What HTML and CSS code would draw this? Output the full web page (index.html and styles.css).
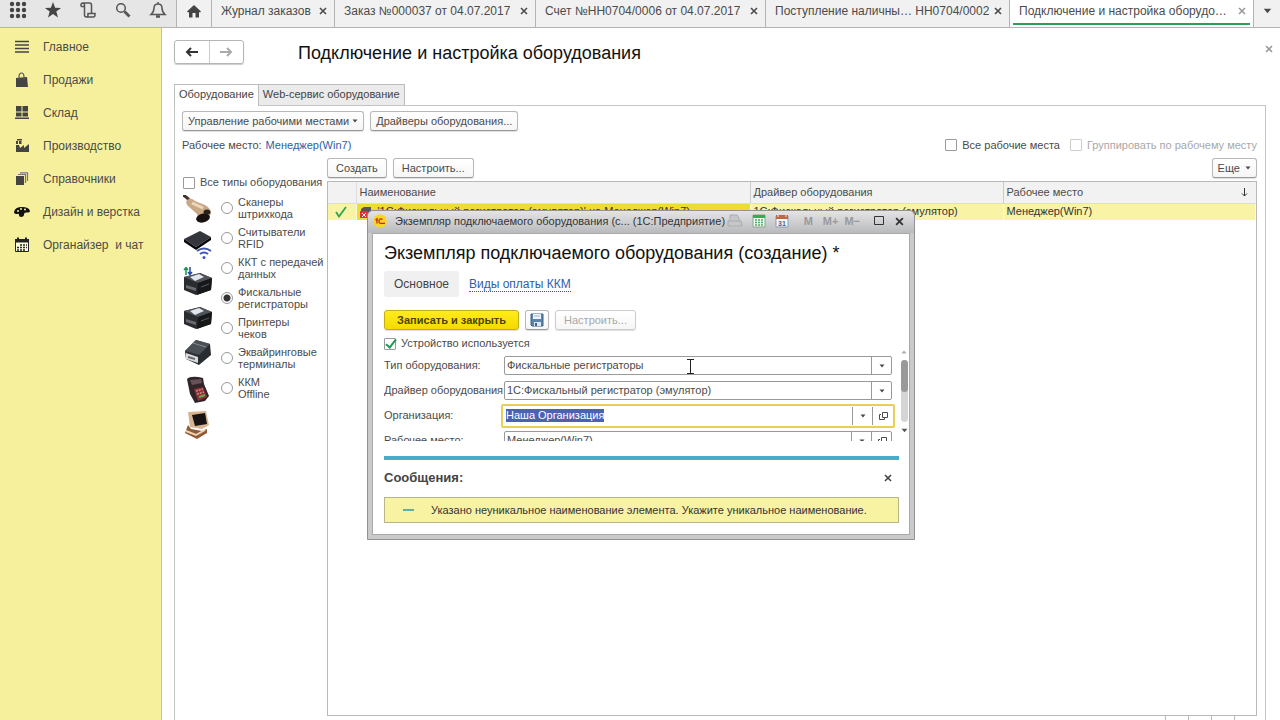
FILE: index.html
```html
<!DOCTYPE html>
<html lang="ru">
<head>
<meta charset="utf-8">
<title>Подключение и настройка оборудования</title>
<link rel="stylesheet" href="styles.css">
</head>
<body>
<svg class="defs" aria-hidden="true">
  <symbol id="i-cross" viewBox="0 0 8 8"><path d="M1 1l6 6M7 1L1 7" fill="none" stroke="currentColor" stroke-width="1.6"/></symbol>
  <symbol id="i-down" viewBox="0 0 6 4"><path d="M0.500 0.500h5L3 3.500z" fill="currentColor"/></symbol>
  <symbol id="i-open" viewBox="0 0 10 10"><path d="M4.500 1.500h5v5h-5zM3 3.500H1.500v5h5V7" fill="none" stroke="currentColor"/></symbol>
  <symbol id="i-printer" viewBox="0 0 30 28">
    <path d="M1 8L17 4l12 5-1 12-15 5L1 21z" fill="#2b2c2f"/>
    <path d="M1 8L17 4l12 5-14 5z" fill="#50535a"/>
    <path d="M7 8l9-3 5 3-9 4z" fill="#dfe6ee"/>
    <path d="M15 14l14-5-1 12-14 5z" fill="#17181a"/>
    <path d="M3 16l10 3v3L3 19z" fill="#686b70"/>
    <path d="M18 18l8-3" stroke="#5a5d62"/>
  </symbol>
</svg>

<header class="topbar">
  <nav class="tools">
    <button aria-label="Меню"><svg viewBox="0 0 18 18" width="18" height="18" fill="#444"><circle cx="3" cy="3" r="2.200"/><circle cx="9" cy="3" r="2.200"/><circle cx="15" cy="3" r="2.200"/><circle cx="3" cy="9" r="2.200"/><circle cx="9" cy="9" r="2.200"/><circle cx="15" cy="9" r="2.200"/><circle cx="3" cy="15" r="2.200"/><circle cx="9" cy="15" r="2.200"/><circle cx="15" cy="15" r="2.200"/></svg></button>
    <button aria-label="Избранное"><svg viewBox="0 0 18 18" width="18" height="18"><path d="M9 1l2.100 5.700 6 .2-4.800 3.700 1.700 5.900L9 13.100l-5 3.400 1.700-5.900L.9 6.900l6-.2z" fill="#444"/></svg></button>
    <button aria-label="История"><svg viewBox="0 0 18 18" width="18" height="18" fill="none" stroke="#555" stroke-width="1.500"><path d="M2 5.500V4q0-2 2-2h6.500q2 0 2 2v8.500M2 5.500h3.500V4q0-1.500-1.500-2M5.500 5.500V14q0 2 2 2H14q2 0 2-2v-1.500H9V14q0 2-2 2"/></svg></button>
    <button aria-label="Поиск"><svg viewBox="0 0 18 18" width="18" height="18" fill="none" stroke="#555"><circle cx="7" cy="7" r="4.300" stroke-width="1.500"/><path d="M10.500 10.500l5 5" stroke-width="2.800"/></svg></button>
    <button aria-label="Уведомления"><svg viewBox="0 0 18 18" width="18" height="18" fill="none" stroke="#555" stroke-width="1.500"><path d="M2 13.500Q5 11 5 7q0-4 4-4t4 4q0 4 3 6.500zM9 3V1"/><path d="M7 15.500h4" stroke-width="2.500"/></svg></button>
  </nav>
  <nav class="windows">
    <button class="home" aria-label="Начальная страница"><svg viewBox="0 0 14 14" width="14" height="14"><path d="M7 1l7 6.500-1 1L12 8v5.500H8.500V9h-3v4.500H2V8l-1 .5-1-1z" fill="#444"/></svg></button>
    <div class="win w1"><a href="#">Журнал заказов</a><button aria-label="Закрыть"><svg width="8" height="8"><use href="#i-cross"/></svg></button></div>
    <div class="win w2"><a href="#">Заказ №000037 от 04.07.2017</a><button aria-label="Закрыть"><svg width="8" height="8"><use href="#i-cross"/></svg></button></div>
    <div class="win w3"><a href="#">Счет №НН0704/0006 от 04.07.2017</a><button aria-label="Закрыть"><svg width="8" height="8"><use href="#i-cross"/></svg></button></div>
    <div class="win w4"><a href="#">Поступление наличны…&nbsp;НН0704/0002</a><button aria-label="Закрыть"><svg width="8" height="8"><use href="#i-cross"/></svg></button></div>
    <div class="win w5 current"><a href="#">Подключение и настройка оборудо…</a><button aria-label="Закрыть"><svg width="8" height="8"><use href="#i-cross"/></svg></button></div>
    <button class="all" aria-label="Все окна"><svg width="9" height="6"><use href="#i-down"/></svg></button>
  </nav>
</header>

<div class="body">
  <nav class="sidebar">
    <a href="#"><svg viewBox="0 0 16 16" width="16" height="16"><path d="M1 2.500h14M1 6h14M1 9.500h14M1 13h14" stroke="#444" stroke-width="1.600"/></svg>Главное</a>
    <a href="#"><svg viewBox="0 0 16 16" width="16" height="16"><path d="M2 6l11-1 1 10H2z" fill="#444"/><path d="M5 8V5q0-4 2.500-4T10 5v3" fill="none" stroke="#555" stroke-width="1.200"/></svg>Продажи</a>
    <a href="#"><svg viewBox="0 0 16 16" width="16" height="16" fill="#444"><path d="M2 1h5.500v5.500H2zM8.500 1H14v5.500H8.500zM2 7.500h5.500v4H2zM8.500 7.500H14v4H8.500zM1 12.500h14V14H1z"/></svg>Склад</a>
    <a href="#"><svg viewBox="0 0 16 16" width="16" height="16" fill="#444"><path d="M2 14V7h3l1 3 4-3v3l5-4v8zM2 3h2v3H2zM5 3h2.500v3H5zM3 1h5v1.500H3z"/></svg>Производство</a>
    <a href="#"><svg viewBox="0 0 16 16" width="16" height="16"><path d="M2 5h8v9H2z" fill="#444"/><path d="M4 3.500h7.500V12M6 1.800h7.500V10" fill="none" stroke="#777" stroke-width="1.200"/></svg>Справочники</a>
    <a href="#"><svg viewBox="0 0 16 16" width="16" height="16"><path d="M0 8Q1 3 8 3t8 4q0 2-4 1.500-2 0-2 2T7 13q-2 0-2-2t-2-1Q0 10 0 8z" fill="#111"/><g fill="#f6f09c"><circle cx="4" cy="7" r="1"/><circle cx="7" cy="5" r="1"/><circle cx="11" cy="5.500" r="1"/></g></svg>Дизайн и верстка</a>
    <a href="#"><svg viewBox="0 0 16 16" width="16" height="16"><path d="M1.500 2.500h13v12h-13z" fill="#fffde0" stroke="#222"/><path d="M1 2h14v3.500H1zM3 .5h2V3H3zM11 .5h2V3h-2z" fill="#222"/><path d="M6 8h7M3 10.500h10M3 13h8" stroke="#222" stroke-width="1.500" stroke-dasharray="2 1"/></svg>Органайзер&nbsp; и чат</a>
  </nav>

  <main class="main">
    <div class="heading">
      <div class="history">
        <button aria-label="Назад"><svg viewBox="0 0 14 10" width="14" height="10"><path d="M13 5H3M6 1L2 5l4 4" fill="none" stroke="#333" stroke-width="2"/></svg></button>
        <button aria-label="Вперед"><svg viewBox="0 0 14 10" width="14" height="10"><path d="M1 5h10M8 1l4 4-4 4" fill="none" stroke="#aaa" stroke-width="2"/></svg></button>
      </div>
      <h1>Подключение и настройка оборудования</h1>
      <button class="close" aria-label="Закрыть форму"><svg width="8" height="8"><use href="#i-cross"/></svg></button>
    </div>

    <div class="tabs"><button class="active">Оборудование</button><button>Web-сервис оборудование</button></div>

    <section class="panel">
      <div class="commands top-commands">
        <button class="btn">Управление рабочими местами<svg width="6" height="4"><use href="#i-down"/></svg></button>
        <button class="btn">Драйверы оборудования...</button>
      </div>
      <div class="place">
        <span>Рабочее место:</span><a href="#">Менеджер(Win7)</a>
        <label class="check first"><input type="checkbox">Все рабочие места</label>
        <label class="check off"><input type="checkbox" disabled>Группировать по рабочему месту</label>
      </div>

      <div class="split">
        <div class="types">
          <label class="check"><input type="checkbox">Все типы оборудования</label>
          <div class="typecols">
            <div class="pics">
              <svg viewBox="0 0 30 28"><path d="M0 0q7 4 8 9" fill="none" stroke="#443028" stroke-width="3"/><path d="M4 5q4-3 8 1l10 4q6 3 6 9l-7 7q-6-1-7-7L5 11q-3-3-1-6z" fill="#c9a886"/><path d="M9 8l11 5" stroke="#ecd8bf" stroke-width="3"/><ellipse cx="20" cy="23" rx="7" ry="4.500" transform="rotate(-15 20 23)" fill="#17120f"/><ellipse cx="24" cy="17" rx="3.500" ry="2.500" fill="#2b211b"/></svg>
              <svg viewBox="0 0 30 28"><path d="M1 8L17 0l11 6-15 10z" fill="#34363d"/><path d="M1 8l12 8v3L1 11zM13 16L28 6v3L13 19z" fill="#08090b"/><path d="M14 20q7-5 14 0M17 23q4-3 8 0" fill="none" stroke="#4052b5" stroke-width="2"/><circle cx="21" cy="26.500" r="1.500" fill="#4052b5"/></svg>
              <svg viewBox="0 0 30 28"><use href="#i-printer" y="2" width="30" height="28"/><path d="M3 8V1M1 3l2-2.500L5 3" fill="none" stroke="#179252" stroke-width="1.500"/><path d="M7 0v7M5 5l2 2.500L9 5" fill="none" stroke="#2946a5" stroke-width="1.500"/></svg>
              <svg viewBox="0 0 30 28"><use href="#i-printer" width="30" height="28"/></svg>
              <svg viewBox="0 0 30 28"><path d="M2 12L13 1l14 4 1 11-12 10L3 20z" fill="#292c30"/><path d="M13 1l14 4-11 11L2 12z" fill="#4b5057"/><path d="M10 4l13 4" stroke="#858b92"/><path d="M3 14l12 4v6L3 20z" fill="#d9dadc"/><path d="M5 17l7 2v2l-7-2z" fill="#666"/></svg>
              <svg viewBox="0 0 30 28"><path d="M4 4q4-4 16-1l1 6 5 12-4 5-10 2-5-9z" fill="#302529"/><path d="M7 5l11-1 1 4-10 2z" fill="#68515b"/><path d="M11 14l9-2 4 10-9 4z" fill="#8c3038"/><path d="M13 16l7-2M14 19l7-2" stroke="#d98b86" stroke-dasharray="2 1" stroke-width="1.500"/><path d="M16 22l6-2" stroke="#65a94c" stroke-width="2"/></svg>
              <svg viewBox="0 0 30 28"><path d="M5 1l18-1 3 14-7 4-12-2z" fill="#d5b48f"/><path d="M9 4l13-2 2 11-12 2z" fill="#151313"/><path d="M5 14l3 4 11 2 5-2v4l-10 6L2 22z" fill="#8f5a36"/><path d="M3 20l10 4 9-5" fill="none" stroke="#edd4b3" stroke-width="2"/></svg>
            </div>
            <div class="radios">
              <label><input type="radio" name="t">Сканеры<br>штрихкода</label>
              <label><input type="radio" name="t">Считыватели<br>RFID</label>
              <label><input type="radio" name="t">ККТ с передачей<br>данных</label>
              <label><input type="radio" name="t" checked>Фискальные<br>регистраторы</label>
              <label><input type="radio" name="t">Принтеры<br>чеков</label>
              <label><input type="radio" name="t">Эквайринговые<br>терминалы</label>
              <label><input type="radio" name="t">ККМ<br>Offline</label>
            </div>
          </div>
        </div>

        <div class="listing">
          <div class="commands">
            <button class="btn">Создать</button>
            <button class="btn">Настроить...</button>
            <button class="btn more">Еще<svg width="6" height="4"><use href="#i-down"/></svg></button>
          </div>
          <div class="grid">
            <table>
              <colgroup><col class="c-mark"><col class="c-name"><col class="c-driver"><col></colgroup>
              <thead><tr><th></th><th>Наименование</th><th>Драйвер оборудования</th><th><span class="sorted">Рабочее место<svg viewBox="0 0 7 9" width="7" height="9"><path d="M3.500 0v8M1 5.500L3.500 8 6 5.500" fill="none" stroke="#333"/></svg></span></th></tr></thead>
              <tbody><tr>
                <td><svg class="tick" viewBox="0 0 12 12" width="12" height="12"><path d="M1 6l3 4.500L11 1" fill="none" stroke="#2fa353" stroke-width="1.800"/></svg></td>
                <td class="cell-on"><span class="named"><svg viewBox="0 0 12 12" width="12" height="12"><path d="M1 3l3-2h7v8H1z" fill="#555"/><path d="M0 5h8v7H0z" fill="#d8343a"/><path d="M2 7l4 4M6 7l-4 4" stroke="#fff"/></svg>'1С:Фискальный регистратор (эмулятор)' на Менеджер(Win7)</span></td>
                <td>1С:Фискальный регистратор (эмулятор)</td>
                <td>Менеджер(Win7)</td>
              </tr></tbody>
            </table>
          </div>
          <div class="pager"><i></i><i></i><i></i><i></i></div>
        </div>
      </div>
    </section>

    <div class="dialog" role="dialog" aria-labelledby="dlg">
      <div class="titlebar">
        <svg viewBox="0 0 14 14" width="14" height="14"><circle cx="7" cy="7" r="6.800" fill="#f9d52a"/><path d="M2.500 6L4 4.800V9.500M9.500 5.500Q8.500 4.500 7 5 5.500 6 6 8q.5 1.500 2 1.300h4" fill="none" stroke="#c8281e" stroke-width="1.300"/></svg>
        <span class="caption">Экземпляр подключаемого оборудования (с... (1С:Предприятие)</span>
        <button class="t-print" aria-label="Печать"><svg viewBox="0 0 16 14" width="16" height="14"><path d="M3 7V1h7l2 3v3M1 7h13l1 5H1z" fill="#c6c7c9" stroke="#a9abad"/></svg></button>
        <button class="t-calc" aria-label="Калькулятор"><svg viewBox="0 0 14 14" width="14" height="14"><path d="M1 1h12v12H1z" fill="#f3f8f0" stroke="#86a78b"/><path d="M1 1h12v3H1z" fill="#31ad55"/><path d="M3 6h9M3 8.500h9M3 11h9" stroke="#55a46a" stroke-width="1.500" stroke-dasharray="2 1"/></svg></button>
        <button class="t-cal" aria-label="Календарь"><svg viewBox="0 0 14 14" width="14" height="14"><path d="M1 2h12v11H1z" fill="#f5f8ff" stroke="#8b9bb5"/><path d="M1 1h12v4H1z" fill="#c2673d"/><path d="M3 0v3M11 0v3" stroke="#eee"/><text x="3" y="12" class="daynum">31</text></svg></button>
        <button class="mem m1">M</button><button class="mem m2">M+</button><button class="mem m3">M−</button>
        <button class="t-max" aria-label="Развернуть"><svg viewBox="0 0 12 10" width="12" height="10"><path d="M1.500 .5h9v8h-9z" fill="none" stroke="#333"/></svg></button>
        <button class="t-close" aria-label="Закрыть окно"><svg width="9" height="9"><use href="#i-cross"/></svg></button>
      </div>
      <div class="sheet">
        <h2 id="dlg">Экземпляр подключаемого оборудования (создание) *</h2>
        <nav class="pages"><a class="here" href="#">Основное</a><a href="#"><span>Виды оплаты ККМ</span></a></nav>
        <div class="commands actions">
          <button class="btn primary">Записать и закрыть</button>
          <button class="btn save" aria-label="Записать"><svg viewBox="0 0 14 14" width="14" height="14"><path d="M1 1h12v12H2l-1-1z" fill="#5b83ac" stroke="#3f6288"/><path d="M3 1h8v5H3z" fill="#eef4fa"/><path d="M4 9h7v4H4z" fill="#dbe6f0"/><path d="M5 10h2v3H5z" fill="#3f6288"/><path d="M4 3h6" stroke="#9fb6cd"/></svg></button>
          <button class="btn off" disabled>Настроить...</button>
        </div>
        <label class="check used"><input type="checkbox" checked>Устройство используется</label>
        <div class="scroller">
          <div class="form">
            <label for="f1">Тип оборудования:</label>
            <div class="field"><input id="f1" value="Фискальные регистраторы"><button aria-label="Выбрать"><svg width="6" height="4"><use href="#i-down"/></svg></button></div>
            <label for="f2">Драйвер оборудования:</label>
            <div class="field"><input id="f2" value="1С:Фискальный регистратор (эмулятор)"><button aria-label="Выбрать"><svg width="6" height="4"><use href="#i-down"/></svg></button></div>
            <label for="f3">Организация:</label>
            <div class="field focus"><input id="f3" value="Наша Организация"><button aria-label="Выбрать"><svg width="6" height="4"><use href="#i-down"/></svg></button><button aria-label="Открыть"><svg width="10" height="10"><use href="#i-open"/></svg></button></div>
            <label for="f4">Рабочее место:</label>
            <div class="field"><input id="f4" value="Менеджер(Win7)"><button aria-label="Выбрать"><svg width="6" height="4"><use href="#i-down"/></svg></button><button aria-label="Открыть"><svg width="10" height="10"><use href="#i-open"/></svg></button></div>
          </div>
          <div class="bar"><svg class="up" width="6" height="4"><use href="#i-down"/></svg><div class="track"><div class="thumb"></div></div><svg width="7" height="5"><use href="#i-down"/></svg></div>
        </div>
        <section class="messages">
          <header><h3>Сообщения:</h3><button aria-label="Закрыть сообщения"><svg width="8" height="8"><use href="#i-cross"/></svg></button></header>
          <p><i></i>Указано неуникальное наименование элемента. Укажите уникальное наименование.</p>
        </section>
      </div>
      <svg class="ibeam" viewBox="0 0 7 15" width="7" height="15"><path d="M0 .5h7M0 14.500h7M3.500 0v15" stroke="#222" fill="none"/></svg>
    </div>
  </main>
</div>
<script src="main.js"></script>
</body>
</html>
```
FILE: styles.css
```css
* { box-sizing: border-box; }
body {
  margin: 0;
  height: 100vh;
  display: flex;
  flex-direction: column;
  overflow: hidden;
  background: #fff;
  color: #4b4b4b;
  font: 11px/13px "Liberation Sans", Arial, sans-serif;
}
button, input { font: inherit; color: inherit; margin: 0; }
button { padding: 0; border: 0; background: none; display: flex; align-items: center; justify-content: center; white-space: nowrap; }
a { color: inherit; text-decoration: none; }
h1, h2, h3, p { margin: 0; font-weight: normal; }
svg { flex: none; display: block; }
.defs { position: absolute; width: 0; height: 0; }

.topbar { display: flex; height: 28px; flex: none; background: #f1f1f1; border-bottom: 1px solid #b4b4b4; font-size: 12px; line-height: 14px; }
.tools { display: flex; width: 176px; background: #e6e6e6; flex: none; align-items: center; padding: 0 0 7px; }
.tools button { width: 35px; }
.windows { display: flex; flex: 1; min-width: 0; }
.windows > * { border-left: 1px solid #b4b4b4; padding-bottom: 5px; }
.home { width: 35px; }
.win { display: flex; align-items: center; justify-content: space-between; padding-left: 9px; padding-right: 7px; min-width: 0; }
.win a { white-space: nowrap; overflow: hidden; }
.w1 { flex: 0 1 123px; }
.w2 { flex: 0 1 201px; }
.w3 { flex: 0 1 230px; }
.w4 { flex: 0 1 244px; }
.w5 { flex: 0 1 244px; }
.win.current { background: #fff; position: relative; }
.current button { color: #999; }
.current::after { content: ""; position: absolute; left: 3px; right: 3px; bottom: 2px; height: 2px; background: #2e9e54; }
.all { flex: 1; }

.body { display: flex; flex: 1; min-height: 0; }
.sidebar { width: 162px; flex: none; background: #f6f09c; border-right: 1px solid #c9c58a; padding-top: 2px; font-size: 12px; line-height: 14px; }
.sidebar a { display: flex; align-items: center; gap: 13px; height: 33px; padding-left: 14px; white-space: nowrap; }

.main { flex: 1; min-width: 0; display: flex; flex-direction: column; padding: 11px 14px 0 12px; position: relative; }
.heading { display: flex; align-items: center; height: 26px; }
.history { display: flex; border: 1px solid #b5b5b5; border-radius: 3px; height: 24px; width: 70px; box-shadow: 0 1px 1px #ccc; }
.history button { flex: 1; }
.history button + button { border-left: 1px solid #ccc; }
.heading h1 { margin-left: 54px; padding-top: 2px; font-size: 18px; line-height: 20px; color: #111; flex: 1; }
.close { color: #999; width: 8px; margin-right: -7px; padding-bottom: 6px; }

.tabs { display: flex; margin-top: 19px; height: 21px; }
.tabs button { border: 1px solid #bcbcbc; border-bottom: 0; background: #ebebeb; padding: 0 4px 2px; color: #444; }
.tabs button + button { border-left: 0; }
.tabs .active { background: #fff; position: relative; height: 22px; }
.panel { flex: 1; min-height: 0; border: 1px solid #c4c4c4; border-bottom: 0; padding: 5px 8px 0 7px; display: flex; flex-direction: column; }
.commands { display: flex; gap: 6px; }
.btn { height: 20px; padding: 0 8px; border: 1px solid #b8b8b8; border-bottom-color: #999; border-radius: 3px; background: linear-gradient(#fff, #f6f6f6); box-shadow: 0 1px 1px #ddd; gap: 5px; }
.top-commands .btn { padding: 0 5px; gap: 3px; }
.place { display: flex; align-items: center; margin-top: 7px; height: 14px; }
.place a { margin-left: 4px; color: #2f5ea8; }
.check { display: flex; align-items: center; gap: 5px; white-space: nowrap; }
.check input { appearance: none; width: 12px; height: 12px; border: 1px solid #9b9b9b; border-radius: 1px; background: #fff; flex: none; }
.check.first { margin-left: auto; margin-right: 10px; }
.check.off { color: #a8a8a8; }
.check.off input { border-color: #ccc; }

.split { display: flex; flex: 1; min-height: 0; margin-top: 6px; }
.types { width: 145px; flex: none; padding: 18px 0 0 1px; }
.typecols { display: flex; margin-top: 4px; gap: 8px; }
.pics { display: flex; flex-direction: column; gap: 8px; padding-top: 2px; }
.pics svg { width: 30px; height: 28px; }
.radios { display: flex; flex-direction: column; }
.radios label { display: flex; align-items: center; gap: 5px; height: 30px; line-height: 12px; white-space: nowrap; }
.radios input { appearance: none; width: 12px; height: 12px; border: 1px solid #999; border-radius: 50%; background: #fff; flex: none; }
.radios input:checked { background: radial-gradient(#333 0 3px, #fff 4px); }

.listing { flex: 1; min-width: 0; display: flex; flex-direction: column; }
.listing .more { margin-left: auto; padding: 0 5px; }
.grid { flex: 1; min-height: 0; margin-top: 3px; border: 1px solid #b9b9b9; }
table { width: 100%; border-collapse: collapse; table-layout: fixed; }
.c-mark { width: 28px; }
.c-name { width: 394px; }
.c-driver { width: 253px; }
th, td { height: 21px; padding: 0 4px 0 3px; text-align: left; font-weight: normal; white-space: nowrap; overflow: hidden; }
th { background: #f2f2f2; border-right: 1px solid #ccc; border-bottom: 1px solid #ddd; }
th:first-child { border-right-color: #ddd; }
th:last-child { border-right: 0; }
td { height: 17px; background: #f9f3a6; color: #333; border-right: 1px solid #fffbd8; }
td:first-child { padding-left: 7px; }
.cell-on { background: #eedc32; }
.sorted, .named { display: flex; align-items: center; gap: 6px; }
.sorted { justify-content: space-between; padding-right: 4px; }
.pager { display: flex; height: 4px; gap: 22px; justify-content: flex-end; padding-right: 22px; flex: none; }
.pager i { width: 1px; background: #bbb; }

.dialog { position: absolute; left: 205px; top: 182px; width: 548px; border: 1px solid #929292; border-radius: 6px 6px 0 0; background: #c9cacc; padding: 0 4px 4px; }
.titlebar { height: 22px; display: flex; align-items: center; margin: 0 -4px; padding: 0 10px 2px 5px; border-radius: 5px 5px 0 0; background: linear-gradient(#e4e4e5, #b9babd); color: #333; }
.caption { flex: 1; min-width: 0; margin-left: 8px; white-space: nowrap; }
.t-print { margin-right: 7px; }
.t-calc { padding-left: 2px; }
.t-cal { margin-left: 9px; }
.daynum { font: bold 7px "Liberation Sans", Arial, sans-serif; fill: #46628f; }
.mem { color: #999; font-weight: bold; }
.m1 { margin-left: 15px; }
.m2 { margin-left: 10px; }
.m3 { margin-left: 6px; }
.t-max { margin-left: 13px; }
.t-close { margin-left: 10px; }
.sheet { background: #fff; border: 1px solid #aaa; padding: 8px 10px 11px 11px; }
.sheet h2 { font-size: 18px; line-height: 22px; color: #111; white-space: nowrap; }
.pages { display: flex; margin-top: 7px; font-size: 12px; line-height: 14px; }
.pages a { padding: 6px 10px; color: #2f5ea8; }
.pages a span { border-bottom: 1px dotted #2f5ea8; }
.pages .here { background: #f0f0f0; color: #444; border-radius: 3px; }
.actions { margin-top: 13px; }
.primary { background: linear-gradient(#ffec1c, #f4da00); border-color: #c5ad19; font-weight: bold; color: #4b4400; padding: 0 12px; }
.save { width: 24px; padding: 0; }
.btn.off { color: #a8a8a8; border-color: #ccc; }
.used { margin-top: 7px; }
.used input:checked { border-color: #999; background: #fff; position: relative; }
.used input:checked::after { content: ""; position: absolute; left: 3px; top: -2px; width: 4px; height: 9px; border: solid #219a59; border-width: 0 2px 2px 0; transform: rotate(38deg); }
.scroller { display: flex; height: 91px; overflow: hidden; margin-right: -9px; }
.form { flex: 1; display: grid; grid-template-columns: 120px 1fr; grid-auto-rows: 19px; row-gap: 6px; align-items: center; padding-top: 6px; white-space: nowrap; }
.field { display: flex; height: 19px; border: 1px solid #999; border-radius: 2px; background: #fff; margin-right: 8px; }
.field input { flex: 1; min-width: 0; border: 0; outline: 0; padding: 0 2px; background: none; }
.field input::selection { background: #4a62b0; color: #fff; }
.field button { width: 20px; border-left: 1px solid #999; }
.focus { height: 24px; border: 2px solid #e8cf55; margin: -2px 5px -2px -3px; padding: 1px; }
.bar { width: 8px; display: flex; flex-direction: column; align-items: center; gap: 6px; color: #555; padding: 0 0 8px; }
.bar .up { transform: rotate(180deg); color: #aaa; }
.track { width: 7px; flex: 1; background: #d5d5d5; border-radius: 4px; }
.thumb { width: 7px; height: 32px; background: #999; border-radius: 4px; }
.messages { margin-top: 15px; border-top: 4px solid #4aaccb; }
.messages header { display: flex; justify-content: space-between; align-items: center; padding: 10px 7px 12px 0; color: #444; }
.messages h3 { font-weight: bold; font-size: 13px; line-height: 15px; }
.messages p { display: flex; align-items: center; height: 26px; background: #f8f2a3; border: 1px solid #b9b58a; padding-left: 18px; color: #333; white-space: nowrap; }
.messages p i { width: 11px; height: 2px; background: #5bb0a8; margin-right: 17px; }
.ibeam { position: absolute; left: 319px; top: 148px; }
```
FILE: main.js
```js
const field = document.getElementById("f3");
field.focus();
field.select();
```
